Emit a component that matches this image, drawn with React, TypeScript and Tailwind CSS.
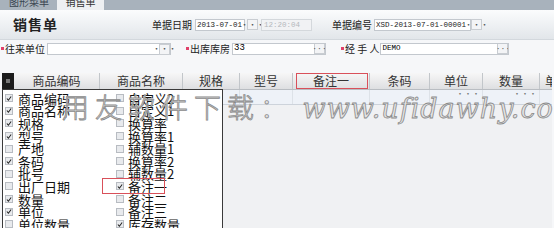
const leftItems: [string, boolean][] = [
  ["商品编码", true],
  ["商品名称", true],
  ["规格", true],
  ["型号", true],
  ["产地", false],
  ["条码", true],
  ["批号", false],
  ["出厂日期", false],
  ["数量", true],
  ["单位", true],
  ["单位数量", false],
];

const rightItems: [string, boolean][] = [
  ["自定义2", false],
  ["自定义1", false],
  ["换算率", false],
  ["换算率1", false],
  ["辅数量1", false],
  ["换算率2", false],
  ["辅数量2", false],
  ["备注一", true],
  ["备注二", false],
  ["备注三", false],
  ["库存数量", true],
];

const columns = [
  { name: "商品编码", w: "w-[86px]" },
  { name: "商品名称", w: "w-[83px]" },
  { name: "规格", w: "w-[57px]" },
  { name: "型号", w: "w-[53px]" },
  { name: "备注一", w: "w-[77px]" },
  { name: "条码", w: "w-[60px]" },
  { name: "单位", w: "w-[53px]" },
  { name: "数量", w: "w-[57px]" },
];

function Dots() {
  return (
    <div className="w-[11px] h-[11px] flex items-center justify-center border border-[#c9cdd2] bg-[#f3f4f6] text-[8px] leading-none text-[#555] shrink-0">
      ···
    </div>
  );
}

function Check({ on }: { on: boolean }) {
  return (
    <div className="w-[8px] h-[8px] border border-[#b8bcc2] bg-[#e8eaed] flex items-center justify-center shrink-0">
      {on && (
        <svg width="7" height="7" viewBox="0 0 7 7">
          <path d="M1 3.5 L2.8 5.5 L6 1.2" stroke="#222" strokeWidth="1.2" fill="none" />
        </svg>
      )}
    </div>
  );
}

function Label({ text, req }: { text: string; req?: boolean }) {
  return (
    <span className="flex items-center text-[10px] leading-none text-[#222] whitespace-nowrap">
      {req && <span className="inline-block w-[3px] h-[3px] bg-[#e0406a] mr-[1px]" />}
      {text}
    </span>
  );
}

const mono = "font-['Liberation_Mono',monospace] whitespace-nowrap overflow-hidden";

export default function App() {
  const cjk = "font-['SimSun','Noto_Sans_CJK_SC',sans-serif]";
  return (
    <div className={`relative w-[554px] h-[228px] overflow-hidden bg-[#f6f7f9] ${cjk}`}>
      {/* tab strip */}
      <div className="h-[10px] bg-[#a8b2bc] flex items-end overflow-hidden pl-[5px] gap-[4px]">
        <div className="h-[14px] px-[4px] text-[10px] leading-[12px] text-[#3a4550]">图形菜单</div>
        <div className="h-[14px] w-[47px] bg-[#eef0f2] text-[10px] leading-[12px] text-[#333] text-center">销售单</div>
      </div>

      {/* header band */}
      <div className="h-[30px] bg-gradient-to-b from-[#fbfcfd] to-[#e2e6ea] border-b border-[#d3d8dd] flex items-center">
        <div className="w-[152px] pl-[13px] text-[14px] font-bold text-[#222] tracking-[1px]">销售单</div>
        <Label text="单据日期" />
        <div className={`ml-[3px] w-[50px] h-[12px] bg-white border border-[#c3c8ce] text-[7.5px] leading-[10px] pl-[1px] text-[#222] ${mono}`}>
          2013-07-01
        </div>
        <div className="ml-[2px]"><Dots /></div>
        <div className={`ml-[3px] w-[51px] h-[12px] bg-[#f1f2f4] border border-[#d4d8dc] text-[7.5px] leading-[10px] pl-[2px] text-[#b4b8bc] ${mono}`}>
          12:20:04
        </div>
        <div className="ml-[20px]"><Label text="单据编号" /></div>
        <div className={`ml-[2px] w-[97px] h-[12px] bg-white border border-[#c3c8ce] text-[7.5px] leading-[10px] pl-[1px] text-[#222] ${mono}`}>
          XSD-2013-07-01-00001
        </div>
        <Dots />
      </div>

      {/* second row */}
      <div className="h-[15px] mt-[1px] flex items-center pl-[1px]">
        <Label text="往来单位" req />
        <div className="ml-[2px] w-[124px] h-[12px] bg-white border border-[#c3c8ce] flex justify-end">
          <Dots />
        </div>
        <div className="ml-[15px]"><Label text="出库库房" req /></div>
        <div className={`ml-[2px] w-[94px] h-[12px] bg-white border border-[#c3c8ce] flex items-center justify-between pl-[1px] text-[9px] ${mono}`}>
          33
          <Dots />
        </div>
        <div className="ml-[15px]"><Label text="经 手 人" req /></div>
        <div className={`ml-[1px] w-[129px] h-[12px] bg-white border border-[#c3c8ce] flex items-center justify-between pl-[1px] text-[7.5px] ${mono}`}>
          DEMO
          <Dots />
        </div>
      </div>

      {/* grid */}
      <div className="mt-[17px] mx-[2px] flex flex-col">
        <div className="h-[17px] flex bg-gradient-to-b from-[#f7f7f7] to-[#dedfe1] border-b border-[#b9bdc2]">
          <div className="w-[12px] bg-[#1c1c1c] flex items-center justify-center shrink-0">
            <div className="w-[4px] h-[4px] bg-[#777]" />
          </div>
          {columns.map((c) => (
            <div
              key={c.name}
              className={`${c.w} shrink-0 flex items-center justify-center border-r border-[#c2c6ca] text-[12px] text-[#333] ${
                c.name === "备注一" ? "relative" : ""
              }`}
            >
              {c.name}
              {c.name === "备注一" && (
                <div className="absolute left-[3px] right-[1px] top-0 bottom-0 border border-[#d9505a]" />
              )}
            </div>
          ))}
          <div className="flex-1 flex items-center pl-[5px] text-[12px] text-[#333] overflow-hidden">单</div>
        </div>
        <div className="h-[15px] flex bg-[#eef2f8] border-b border-[#cdd3db]">
          <div className="w-[12px] shrink-0" />
          {columns.map((c) => (
            <div key={c.name} className={`${c.w} shrink-0 border-r border-[#dde2e8] flex justify-end items-start`}>
              {(c.name === "单位" || c.name === "数量") && (
                <span className="text-[8px] leading-[8px] text-[#777] pr-[2px]">···</span>
              )}
            </div>
          ))}
        </div>
        <div className="h-[130px] bg-[#f0f1f3]" />
      </div>

      {/* column chooser dropdown */}
      <div className="absolute left-[2px] top-[89px] w-[221px] h-[145px] bg-white border border-[#3a3a3a] flex pt-[2px]">
        <div className="w-[111px] flex flex-col">
          {leftItems.map(([t, on]) => (
            <div key={t} className="h-[12.6px] flex items-center gap-[5px] pl-[2px]">
              <Check on={on} />
              <span className="text-[13px] leading-none text-[#111] whitespace-nowrap">{t}</span>
            </div>
          ))}
        </div>
        <div className="flex flex-col">
          {rightItems.map(([t, on]) => (
            <div key={t} className="relative h-[12.6px] flex items-center gap-[4px] pl-[2px]">
              <Check on={on} />
              <span className="text-[13px] leading-none text-[#111] whitespace-nowrap">{t}</span>
              {t === "备注一" && (
                <div className="absolute left-[-12px] top-[-2px] w-[63px] h-[16px] border border-[#d9505a]" />
              )}
            </div>
          ))}
        </div>
      </div>

      {/* watermark */}
      <div className="absolute left-[62px] top-[93px] text-[27px] leading-none whitespace-nowrap text-[#e4e4e4] [-webkit-text-stroke:0.8px_#8a8a8a] tracking-[6px] font-['Noto_Sans_CJK_SC',sans-serif] font-light pointer-events-none">
        用友软件下载：<span className="tracking-[1px] italic font-['DejaVu_Serif',serif]"> www.ufidawhy.com</span>
      </div>
    </div>
  );
}
